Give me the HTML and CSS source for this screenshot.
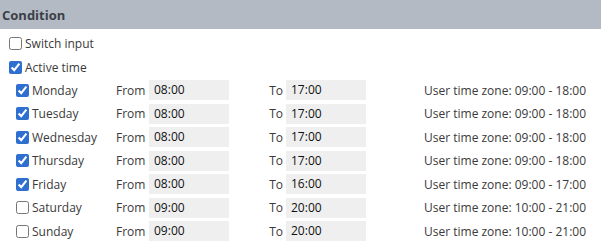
FILE: index.html
```html
<!DOCTYPE html>
<html>
<head>
<meta charset="utf-8">
<link rel="stylesheet" href="styles.css">
</head>
<body>
<div class="header">Condition</div>
<div class="opts">
  <label class="opt"><input type="checkbox"><span>Switch input</span></label>
  <label class="opt"><input type="checkbox" checked><span>Active time</span></label>
</div>
<div class="days">
  <label class="day"><input type="checkbox" checked><span>Monday</span></label>
  <span class="lbl">From</span><span class="box">08:00</span><span class="lbl to">To</span><span class="box">17:00</span><span class="tz">User time zone: 09:00 - 18:00</span>

  <label class="day"><input type="checkbox" checked><span>Tuesday</span></label>
  <span class="lbl">From</span><span class="box">08:00</span><span class="lbl to">To</span><span class="box">17:00</span><span class="tz">User time zone: 09:00 - 18:00</span>

  <label class="day"><input type="checkbox" checked><span>Wednesday</span></label>
  <span class="lbl">From</span><span class="box">08:00</span><span class="lbl to">To</span><span class="box">17:00</span><span class="tz">User time zone: 09:00 - 18:00</span>

  <label class="day"><input type="checkbox" checked><span>Thursday</span></label>
  <span class="lbl">From</span><span class="box">08:00</span><span class="lbl to">To</span><span class="box">17:00</span><span class="tz">User time zone: 09:00 - 18:00</span>

  <label class="day"><input type="checkbox" checked><span>Friday</span></label>
  <span class="lbl">From</span><span class="box">08:00</span><span class="lbl to">To</span><span class="box">16:00</span><span class="tz">User time zone: 09:00 - 17:00</span>

  <label class="day"><input type="checkbox"><span>Saturday</span></label>
  <span class="lbl">From</span><span class="box">09:00</span><span class="lbl to">To</span><span class="box">20:00</span><span class="tz">User time zone: 10:00 - 21:00</span>

  <label class="day"><input type="checkbox"><span>Sunday</span></label>
  <span class="lbl">From</span><span class="box">09:00</span><span class="lbl to">To</span><span class="box">20:00</span><span class="tz">User time zone: 10:00 - 21:00</span>
</div>
</body>
</html>
```
FILE: styles.css
```css
html, body {
  margin: 0;
  padding: 0;
  background: #ffffff;
}
body {
  font-family: "Open Sans", "Noto Sans", sans-serif;
  font-size: 12px;
  color: #3a3a3a;
  width: 601px;
  height: 244px;
  overflow: hidden;
}
.header {
  height: 29px;
  background: #b3bac4;
  box-sizing: border-box;
  padding: 6px 2px 0;
  font-weight: 700;
  font-size: 13px;
  color: #3b4048;
}
.opts {
  display: flex;
  flex-direction: column;
  padding: 4px 0 0 9px;
  gap: 4px;
}
.opt, .day {
  display: flex;
  align-items: center;
  height: 20px;
}
input[type="checkbox"] {
  width: 13px;
  height: 13px;
  margin: 0 3px 0 0;
  accent-color: #2f6fd0;
}
.days {
  display: grid;
  grid-template-columns: 100px 33px 80px 57px 80px auto;
  grid-auto-rows: 20px;
  row-gap: 3.5px;
  padding: 3px 0 0 16px;
  align-items: center;
}
.lbl.to {
  text-align: right;
  padding-right: 3px;
}
.box {
  height: 20px;
  line-height: 20px;
  background: #efefef;
  color: #111111;
  padding-left: 5px;
  box-sizing: border-box;
}
.tz {
  padding-left: 58px;
}
```
